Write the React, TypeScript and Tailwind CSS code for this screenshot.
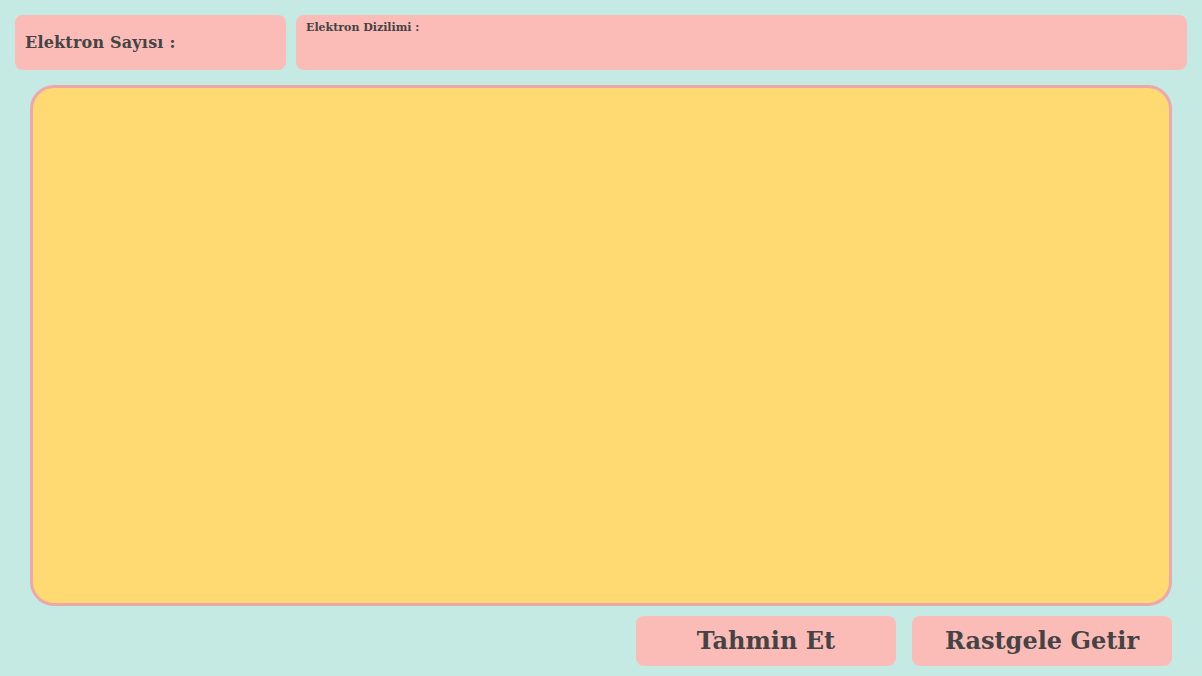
import React from "react";

export default function App() {
  const font = { fontFamily: '"DejaVu Serif", "Liberation Serif", serif' };
  return (
    <div className="w-[1202px] h-[676px] bg-[#c5eae4] flex flex-col text-[#454344]" style={font}>
      <div className="flex pt-[15px] pl-[15px] pr-[15px] gap-[10px]">
        <div className="w-[271px] h-[55px] bg-[#fbbcb8] rounded-[8px] flex items-center pl-[10px]">
          <span className="text-[16px] font-bold tracking-[0.2px]">Elektron Sayısı :</span>
        </div>
        <div className="flex-1 h-[55px] bg-[#fbbcb8] rounded-[8px] pl-[10px] pt-[7px]">
          <span className="text-[11px] font-bold leading-none block">Elektron Dizilimi :</span>
        </div>
      </div>
      <div className="ml-[30px] mt-[15px] w-[1142px] h-[521px] bg-[#ffd972] border-[3px] border-[#eda8ab] rounded-[24px]" />
      <div className="flex justify-end pr-[30px] mt-[10px] gap-[16px]">
        <button className="w-[260px] h-[50px] bg-[#fbbcb8] rounded-[8px] flex items-center justify-center text-[24px] font-bold">
          Tahmin Et
        </button>
        <button className="w-[260px] h-[50px] bg-[#fbbcb8] rounded-[8px] flex items-center justify-center text-[24px] font-bold">
          Rastgele Getir
        </button>
      </div>
    </div>
  );
}
